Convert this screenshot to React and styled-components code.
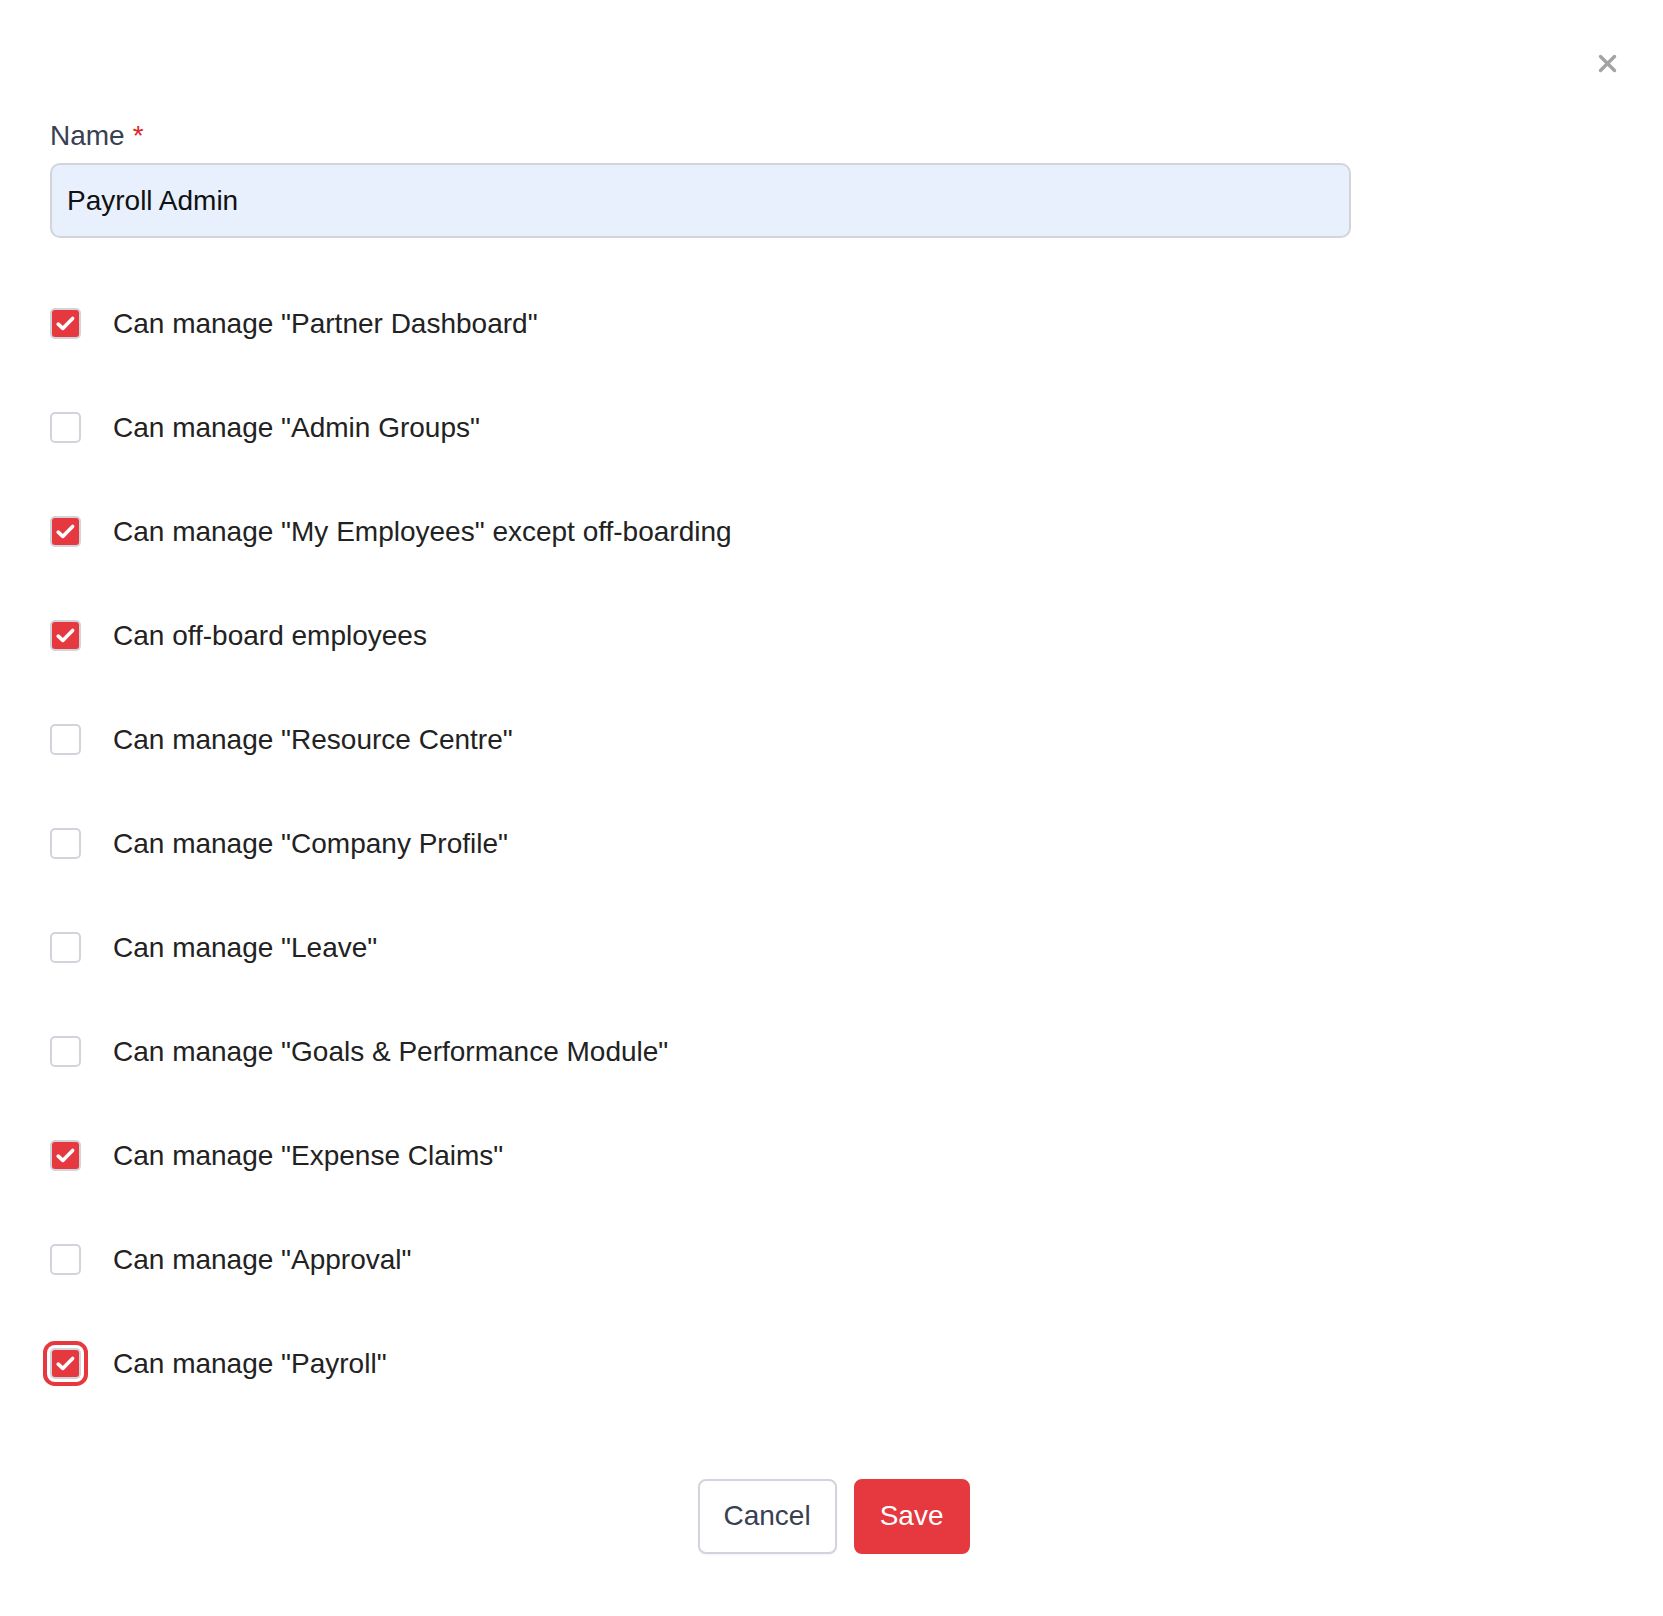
import React, { useState } from "react";
import styled, { createGlobalStyle, css } from "styled-components";

const GlobalStyle = createGlobalStyle`
  html, body {
    margin: 0;
    padding: 0;
    background: #ffffff;
  }
  body {
    font-family: "Liberation Sans", Arial, Helvetica, sans-serif;
    -webkit-font-smoothing: antialiased;
  }
  * { box-sizing: border-box; }
`;

const RED = "#e5383f";

const Modal = styled.div`
  position: relative;
  min-height: 1616px;
  padding: 120px 46px 62px 50px;
  background: #ffffff;
`;

const CloseButton = styled.button`
  position: absolute;
  top: 54px;
  right: 46px;
  width: 19px;
  height: 19px;
  padding: 0;
  border: none;
  background: transparent;
  cursor: pointer;
  display: flex;
  align-items: center;
  justify-content: center;
`;

const Field = styled.div`
  display: flex;
  flex-direction: column;
`;

const FieldLabel = styled.label`
  font-size: 28px;
  line-height: 32px;
  color: #374151;
  margin-bottom: 11px;
`;

const Required = styled.span`
  color: #e02424;
  margin-left: 8px;
`;

const TextInput = styled.input`
  width: 1301px;
  height: 75px;
  padding: 0 15px;
  border: 2px solid #d1d5db;
  border-radius: 10px;
  background: #e8f0fe;
  font-family: inherit;
  font-size: 28px;
  line-height: 32px;
  color: #111111;
  outline: none;
`;

const PermissionList = styled.div`
  display: flex;
  flex-direction: column;
  margin-top: 33.5px;
`;

const PermissionRow = styled.label`
  display: flex;
  align-items: center;
  gap: 32px;
  height: 104px;
  cursor: pointer;
`;

const HiddenInput = styled.input`
  position: absolute;
  opacity: 0;
  width: 1px;
  height: 1px;
  margin: 0;
  pointer-events: none;
`;

const Box = styled.span`
  flex: none;
  width: 31px;
  height: 31px;
  border: 2px solid #d1d5db;
  border-radius: 5px;
  background: ${(p) => (p.$checked ? RED : "#ffffff")};
  display: flex;
  align-items: center;
  justify-content: center;
  ${(p) =>
    p.$focused &&
    css`
      box-shadow: 0 0 0 3px #ffffff, 0 0 0 7px ${RED};
    `}
`;

const RowText = styled.span`
  font-size: 28px;
  line-height: 32px;
  color: #222222;
`;

const Footer = styled.div`
  display: flex;
  justify-content: center;
  gap: 17px;
  margin-top: 63.4px;
`;

const Button = styled.button`
  height: 75px;
  padding: 0 24px;
  border-radius: 8px;
  font-family: inherit;
  font-size: 28px;
  line-height: 32px;
  cursor: pointer;
  ${(p) =>
    p.$primary
      ? css`
          border: 2px solid ${RED};
          background: ${RED};
          color: #ffffff;
        `
      : css`
          border: 2px solid #d1d5db;
          background: #ffffff;
          color: #374151;
          box-shadow: 0 1px 2px rgba(0, 0, 0, 0.05);
        `}
`;

const initialPermissions = [
  { label: 'Can manage "Partner Dashboard"', checked: true },
  { label: 'Can manage "Admin Groups"', checked: false },
  { label: 'Can manage "My Employees" except off-boarding', checked: true },
  { label: "Can off-board employees", checked: true },
  { label: 'Can manage "Resource Centre"', checked: false },
  { label: 'Can manage "Company Profile"', checked: false },
  { label: 'Can manage "Leave"', checked: false },
  { label: 'Can manage "Goals & Performance Module"', checked: false },
  { label: 'Can manage "Expense Claims"', checked: true },
  { label: 'Can manage "Approval"', checked: false },
  { label: 'Can manage "Payroll"', checked: true },
];

function CheckIcon() {
  return (
    <svg width="27" height="27" viewBox="0 0 27 27" aria-hidden="true">
      <path
        d="M6.2 14.2 L10.8 18.4 L20.6 8.4"
        fill="none"
        stroke="#ffffff"
        strokeWidth="3.6"
        strokeLinecap="round"
        strokeLinejoin="round"
      />
    </svg>
  );
}

export default function App() {
  const [name, setName] = useState("Payroll Admin");
  const [perms, setPerms] = useState(initialPermissions);
  const [focused, setFocused] = useState(initialPermissions.length - 1);

  const toggle = (i) => {
    setPerms((prev) =>
      prev.map((p, j) => (j === i ? { ...p, checked: !p.checked } : p))
    );
    setFocused(i);
  };

  return (
    <>
      <GlobalStyle />
      <Modal>
        <CloseButton aria-label="Close">
          <svg width="19" height="19" viewBox="0 0 19 19" aria-hidden="true">
            <path
              d="M2.5 2.5 L16.5 16.5 M16.5 2.5 L2.5 16.5"
              stroke="#a3a3a3"
              strokeWidth="3.4"
              strokeLinecap="round"
            />
          </svg>
        </CloseButton>

        <Field>
          <FieldLabel htmlFor="group-name">
            Name<Required>*</Required>
          </FieldLabel>
          <TextInput
            id="group-name"
            value={name}
            onChange={(e) => setName(e.target.value)}
          />
        </Field>

        <PermissionList>
          {perms.map((p, i) => (
            <PermissionRow key={p.label}>
              <HiddenInput
                type="checkbox"
                checked={p.checked}
                onChange={() => toggle(i)}
              />
              <Box $checked={p.checked} $focused={focused === i}>
                {p.checked && <CheckIcon />}
              </Box>
              <RowText>{p.label}</RowText>
            </PermissionRow>
          ))}
        </PermissionList>

        <Footer>
          <Button type="button">Cancel</Button>
          <Button type="button" $primary>
            Save
          </Button>
        </Footer>
      </Modal>
    </>
  );
}
